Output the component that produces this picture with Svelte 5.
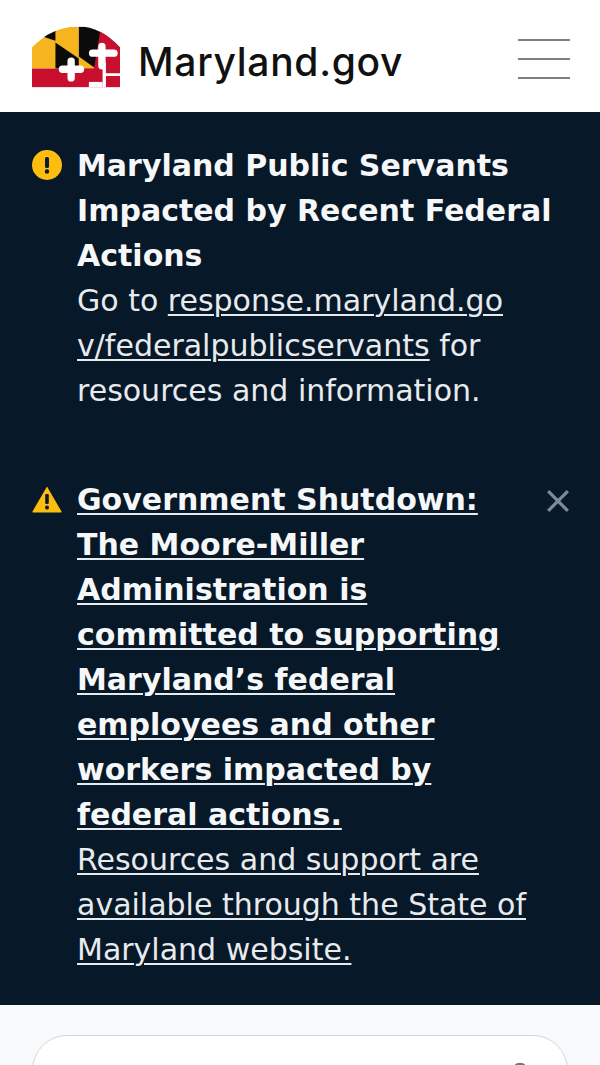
<script lang="ts">
	const menuLines = [0, 1, 2];
</script>

<div class="page">
	<header class="site-header">
		<a class="brand" href="#top">
			<svg class="flag" viewBox="35 32 263 183" aria-hidden="true">
				<defs>
					<clipPath id="dome">
						<path d="M35 215V95Q52 78 80 58Q122 32 175 32Q240 32 298 95V215Z" />
					</clipPath>
				</defs>
				<g clip-path="url(#dome)">
					<rect x="35" y="32" width="140" height="126" fill="#f6b51e" />
					<rect x="175" y="32" width="123" height="126" fill="#0b0b0b" />
					<path d="M60 32H105V75L60 60Z" fill="#0b0b0b" />
					<path d="M105 80L175 128V158H105Z" fill="#0b0b0b" />
					<path d="M175 122L225 158H175Z" fill="#f6b51e" />
					<path d="M240 40L300 80V160H220Z" fill="#c8102e" />
					<rect x="35" y="158" width="263" height="57" fill="#c8102e" />
					<rect x="205" y="198" width="41" height="17" fill="#fff" />
					<g stroke="#fff" fill="none" stroke-linecap="round">
						<path d="M244 92V150M216 112H280" stroke-width="22" />
						<path d="M152 136V186M126 160H180" stroke-width="22" />
					</g>
					<path d="M246 140H256V172H298V180H256V215H246Z" fill="#fff" />
				</g>
			</svg>
			<span class="wordmark">Maryland.gov</span>
		</a>
		<button class="menu" aria-label="Menu">
			{#each menuLines as line (line)}
				<span></span>
			{/each}
		</button>
	</header>

	<section class="alerts">
		<div class="alert">
			<svg class="icon" viewBox="0 0 30 30" aria-hidden="true">
				<circle cx="15" cy="15" r="15" fill="#fdbd0f" />
				<rect x="13" y="7" width="4" height="11" rx="1.5" fill="#0a1a2b" />
				<circle cx="15" cy="21.5" r="2.2" fill="#0a1a2b" />
			</svg>
			<div class="body">
				<strong>Maryland Public Servants Impacted by Recent Federal Actions</strong>
				<p>Go to <a href="#top">response.maryland.go<br />v/federalpublicservants</a> for resources and information.</p>
			</div>
		</div>

		<div class="alert dismissible">
			<svg class="icon" viewBox="0 0 30 30" aria-hidden="true">
				<path d="M15 2.5L29.5 27.5Q30 28.5 29 28.5H1Q0 28.5 .5 27.5Z" fill="#fdbd0f" />
				<rect x="13.2" y="10" width="3.6" height="10" rx="1.2" fill="#0a1a2b" />
				<circle cx="15" cy="23.5" r="2" fill="#0a1a2b" />
			</svg>
			<div class="body">
				<a href="#top"><strong>Government Shutdown: The Moore-Miller Administration is committed to supporting Maryland’s federal employees and other workers impacted by federal actions.</strong></a>
				<p><a href="#top">Resources and support are available through the State of Maryland website.</a></p>
			</div>
			<button class="close" aria-label="Dismiss">
				<svg viewBox="0 0 22 22" aria-hidden="true">
					<path d="M2 2L20 20M20 2L2 20" stroke="#7d8a97" stroke-width="3" fill="none" />
				</svg>
			</button>
		</div>
	</section>

	<section class="search-band">
		<div class="search">
			<svg viewBox="0 0 20 20" aria-hidden="true">
				<circle cx="10" cy="10" r="7" stroke="#777" stroke-width="2.5" fill="none" />
			</svg>
		</div>
	</section>
</div>

<style>
	:global(body) {
		margin: 0;
		background: #f8f9fb;
	}

	.page {
		height: 1065px;
		overflow: hidden;
		font-family: "DejaVu Sans", sans-serif;
	}

	.site-header {
		height: 112px;
		box-sizing: border-box;
		padding: 0 30px 0 32px;
		display: flex;
		align-items: center;
		justify-content: space-between;
		background: #fff;
	}

	.brand {
		display: flex;
		align-items: center;
		gap: 18px;
		color: #111;
		text-decoration: none;
	}

	.flag {
		width: 88px;
		height: 62px;
		margin-top: 1px;
	}

	.wordmark {
		font-family: Inter, sans-serif;
		font-size: 39px;
		font-weight: 500;
		letter-spacing: 0.7px;
		margin-top: 10px;
	}

	.menu {
		width: 52px;
		padding: 0;
		border: 0;
		background: none;
		display: flex;
		flex-direction: column;
		gap: 17px;
		margin-top: 5px;
	}

	.menu span {
		height: 2px;
		background: #808080;
	}

	.alerts {
		background: #071828;
		padding: 31px 30px 33px 32px;
		display: flex;
		flex-direction: column;
		gap: 64px;
		color: #e8ebee;
		font-size: 30px;
		line-height: 45px;
	}

	.alert {
		display: grid;
		grid-template-columns: 30px 1fr;
		column-gap: 15px;
	}

	.dismissible {
		grid-template-columns: 30px 1fr 24px;
	}

	.icon {
		width: 30px;
		height: 30px;
		margin-top: 7px;
	}

	.body strong {
		display: block;
		font-weight: 700;
		color: #f6f7f8;
	}

	.body p {
		margin: 0;
	}

	.body a {
		color: inherit;
		text-decoration: underline;
		text-decoration-thickness: 2px;
		text-underline-offset: 3px;
	}

	.close {
		padding: 0;
		border: 0;
		background: none;
		width: 24px;
		height: 24px;
		margin-top: 12px;
	}

	.close svg {
		display: block;
		width: 24px;
		height: 24px;
	}

	.search-band {
		padding: 30px 32px 0;
	}

	.search {
		height: 70px;
		box-sizing: border-box;
		position: relative;
		background: #fff;
		border: 1.5px solid #d3d5d8;
		border-radius: 35px;
	}

	.search svg {
		position: absolute;
		top: 25px;
		right: 37px;
		width: 20px;
		height: 20px;
	}
</style>
